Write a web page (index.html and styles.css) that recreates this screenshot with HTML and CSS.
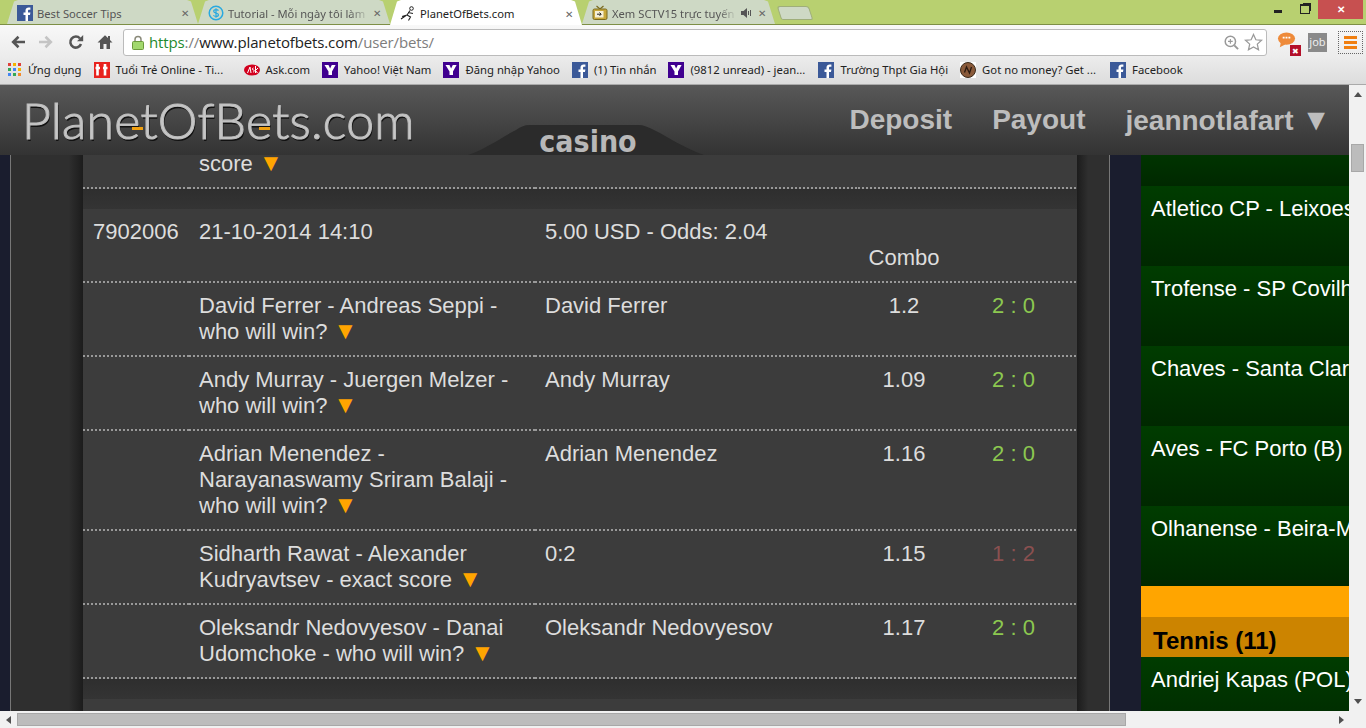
FILE: index.html
```html
<!DOCTYPE html>
<html lang="vi">
<head>
<meta charset="utf-8">
<title>PlanetOfBets.com</title>
<link rel="stylesheet" href="styles.css">
</head>
<body>
<svg class="defs" width="0" height="0" aria-hidden="true">
  <defs>
    <symbol id="fb" viewBox="0 0 16 16"><rect width="16" height="16" fill="#3b5998"/><path d="M11 16V10h2l.4-2.5H11V6c0-.8.3-1.2 1.2-1.2h1.2V2.500c-.4 0-1-.1-1.800-.1C10 2.400 8.500 3.500 8.500 5.600v1.900H6.500V10h2v6z" fill="#fff"/></symbol>
    <symbol id="yh" viewBox="0 0 16 16"><rect width="16" height="16" fill="#400090"/><path d="M2.500 3h4l1.600 3.600L9.800 3h3.800L10 9.500V13H6.500V9.500z" fill="#fff"/></symbol>
  </defs>
</svg>

<header class="chrome">
  <div class="tabstrip">
    <div class="tab tab-first">
      <svg class="fav" viewBox="0 0 16 16"><use href="#fb"/></svg>
      <span class="tab-title">Best Soccer Tips</span>
      <span class="tab-x">✕</span>
    </div>
    <div class="tab tab-second">
      <svg class="fav" viewBox="0 0 16 16"><circle cx="8" cy="8" r="6.800" fill="none" stroke="#29a9e0" stroke-width="1.500"/><path d="M10.500 5.600C10 4.800 9 4.600 8 4.600c-1.300 0-2.300.6-2.300 1.700C5.700 8.700 10.500 7.400 10.500 9.800c0 1.100-1.100 1.700-2.500 1.700-1.100 0-2.100-.4-2.600-1.200M8 3.200v9.600" fill="none" stroke="#29a9e0" stroke-width="1.200"/></svg>
      <span class="tab-title tab-fade">Tutorial - Mỗi ngày tôi làm</span>
      <span class="tab-x">✕</span>
    </div>
    <div class="tab tab-active">
      <svg class="fav" viewBox="0 0 16 16"><circle cx="11.500" cy="2.500" r="1.800" fill="none" stroke="#222" stroke-width="1"/><path d="M10 4.500L7 9l-5 1.500M7 9l3.500 2-2 3.500M8 6.500l5 1M1 13l5-3.500" fill="none" stroke="#222" stroke-width="1.100"/></svg>
      <span class="tab-title tab-dark">PlanetOfBets.com</span>
      <span class="tab-x">✕</span>
    </div>
    <div class="tab tab-last">
      <svg class="fav" viewBox="0 0 16 16"><path d="M4.500 1l3.500 3 3.500-3" fill="none" stroke="#7a6a20" stroke-width="1.200"/><rect x="1" y="4" width="14" height="10.500" rx="1.500" fill="#c8a83c" stroke="#7a6a20"/><rect x="3" y="6" width="8.500" height="6.500" fill="#f6f0d8"/><path d="M5 9.200h4M7.500 7.500l1.700 1.700-1.700 1.700" stroke="#222" fill="none"/></svg>
      <span class="tab-title tab-fade">Xem SCTV15 trực tuyến</span>
      <svg class="tab-audio" viewBox="0 0 12 12"><path d="M1 4h2.500L7 1v10L3.500 8H1z" fill="#555"/><path d="M8.500 4v4M10.500 3v6" stroke="#555"/></svg>
      <span class="tab-x">✕</span>
    </div>
    <div class="tab-new"></div>
    <div class="winctl">
      <span class="win-min"></span>
      <span class="win-max"></span>
      <span class="win-close">✕</span>
    </div>
  </div>

  <div class="toolbar">
    <svg class="tool tool-back" viewBox="0 0 16 16"><path d="M15 8H4M8.500 2.800L3.200 8l5.300 5.200" fill="none" stroke="#555" stroke-width="2.600"/></svg>
    <svg class="tool tool-fwd" viewBox="0 0 16 16"><path d="M1 8h11M7.500 2.800L12.800 8l-5.300 5.200" fill="none" stroke="#c4c4c4" stroke-width="2.600"/></svg>
    <svg class="tool tool-reload" viewBox="0 0 16 16"><path d="M13 10A5.500 5.500 0 1 1 12 4.500" fill="none" stroke="#555" stroke-width="2.500"/><path d="M9 7.200h6.200V1z" fill="#555"/></svg>
    <svg class="tool tool-home" viewBox="0 0 16 16"><path d="M8 1.200L.5 8.500H3V15H6.500V10H9.500V15H13V8.500H15.500L13 6V2H11V4.100z" fill="#555"/></svg>
    <div class="omnibox">
      <svg class="lock" viewBox="0 0 12 15"><path d="M3 7V4.500a3 3 0 0 1 6 0V7" fill="none" stroke="#8a8a7a" stroke-width="1.500"/><rect x=".5" y="6.500" width="11" height="8" rx="1" fill="#a2d86e" stroke="#6c9a3c"/></svg>
      <span class="url"><span class="u-https">https</span><span class="u-path">://</span><span class="u-host">www.planetofbets.com</span><span class="u-path">/user/bets/</span></span>
      <svg class="omni-ic" viewBox="0 0 16 16"><circle cx="6.800" cy="6.800" r="5.500" fill="#fff" stroke="#999" stroke-width="1.600"/><path d="M4.300 6.800h5M6.800 4.300v5" stroke="#999" stroke-width="1.200"/><path d="M11 11l4 4" stroke="#999" stroke-width="2"/></svg>
      <svg class="omni-star" viewBox="0 0 20 20"><path d="M10 1.500l2.500 5.600 6 .6-4.500 4 1.300 6L10 14.700l-5.300 3 1.300-6-4.500-4 6-.6z" fill="#fff" stroke="#999" stroke-width="1.300"/></svg>
    </div>
    <div class="ext-chat">
      <svg class="ext-chat-ic" viewBox="0 0 20 20"><ellipse cx="10" cy="8" rx="9" ry="6.500" fill="#ee8a3a"/><path d="M4 12l-1 5 6-3z" fill="#ee8a3a"/><path d="M6 7h2M9 7h2M12 7h2" stroke="#fff" stroke-width="2"/></svg>
      <span class="ext-badge">✖</span>
    </div>
    <span class="ext-job">job</span>
    <div class="menu-btn"><i></i><i></i><i></i></div>
  </div>

  <nav class="bookmarks">
    <a class="bm"><svg class="bm-ic-apps" viewBox="0 0 13 13"><rect width="3" height="3" fill="#e0403a"/><rect x="5" width="3" height="3" fill="#f4b400"/><rect x="10" width="3" height="3" fill="#e0403a"/><rect y="5" width="3" height="3" fill="#34a853"/><rect x="5" y="5" width="3" height="3" fill="#4285f4"/><rect x="10" y="5" width="3" height="3" fill="#f4b400"/><rect y="10" width="3" height="3" fill="#4285f4"/><rect x="5" y="10" width="3" height="3" fill="#34a853"/><rect x="10" y="10" width="3" height="3" fill="#f4892a"/></svg>Ứng dụng</a>
    <a class="bm bm-long"><svg class="bm-ic" viewBox="0 0 16 16"><rect width="16" height="16" fill="#e8231e"/><path d="M3.500 2v11.500M1.500 6h4.500M11 2v11.500M9 6h4.500" stroke="#fff" stroke-width="2.600"/></svg>Tuổi Trẻ Online - Ti...</a>
    <a class="bm"><svg class="bm-ic" viewBox="0 0 16 16"><ellipse cx="8" cy="8" rx="8" ry="5.500" fill="#d2001e"/><path d="M3.500 11l2.500-6 1 6M9.500 6c-1.500 0-1.500 2 0 2s1 2-.5 2M11.500 4v7M14 6l-2.500 2.500L13.500 11" fill="none" stroke="#fff" stroke-width="1"/></svg>Ask.com</a>
    <a class="bm"><svg class="bm-ic" viewBox="0 0 16 16"><use href="#yh"/></svg>Yahoo! Việt Nam</a>
    <a class="bm"><svg class="bm-ic" viewBox="0 0 16 16"><use href="#yh"/></svg>Đăng nhập Yahoo</a>
    <a class="bm"><svg class="bm-ic" viewBox="0 0 16 16"><use href="#fb"/></svg>(1) Tin nhắn</a>
    <a class="bm bm-long"><svg class="bm-ic" viewBox="0 0 16 16"><use href="#yh"/></svg>(9812 unread) - jean...</a>
    <a class="bm"><svg class="bm-ic" viewBox="0 0 16 16"><use href="#fb"/></svg>Trường Thpt Gia Hội</a>
    <a class="bm bm-long"><svg class="bm-ic" viewBox="0 0 16 16"><rect width="16" height="16" fill="#fff"/><circle cx="8" cy="8" r="7.500" fill="#8a5a3a" stroke="#3a2a1a"/><path d="M4.500 10.500L6.500 5l3 6 2-6" fill="none" stroke="#2a1a10" stroke-width="1.300"/></svg>Got no money? Get ...</a>
    <a class="bm"><svg class="bm-ic" viewBox="0 0 16 16"><use href="#fb"/></svg>Facebook</a>
  </nav>
</header>

<div class="viewport">
  <div class="pagecol">
    <div class="site-head">
      <div class="logo">Plan<span class="logo-e logo-e-first">e</span>tOfB<span class="logo-e">e</span>ts.com</div>
      <div class="casino-tab">
        <svg class="casino-shape" viewBox="0 0 236 30" preserveAspectRatio="none"><path d="M0 30C18 24 34 12 48 5 52 2 56 0 62 0H170C176 0 180 2 186 5 200 12 218 24 236 30z" fill="#2b2b2b"/></svg>
        <span class="casino-label">casino</span>
      </div>
      <nav class="site-nav">
        <a>Deposit</a>
        <a>Payout</a>
        <a>jeannotlafart <span class="nav-arrow">▼</span></a>
      </nav>
    </div>
    <div class="site-body">
      <div class="gutter"></div>
      <div class="panel">
        <table class="bets">
          <colgroup><col class="c1"><col class="c2"><col class="c3"><col class="c4"><col class="c5"></colgroup>
          <tbody>
            <tr class="row row-cut"><td></td><td>score <b class="arr">▼</b></td><td></td><td></td><td></td></tr>
            <tr class="spacer"><td colspan="5"></td></tr>
            <tr class="row row-head"><td>7902006</td><td>21-10-2014 14:10</td><td>5.00 USD - Odds: 2.04</td><td class="ctr"><br>Combo</td><td></td></tr>
            <tr class="row"><td></td><td>David Ferrer - Andreas Seppi - who will win? <b class="arr">▼</b></td><td>David Ferrer</td><td class="ctr">1.2</td><td class="ctr win">2 : 0</td></tr>
            <tr class="row"><td></td><td>Andy Murray - Juergen Melzer - who will win? <b class="arr">▼</b></td><td>Andy Murray</td><td class="ctr">1.09</td><td class="ctr win">2 : 0</td></tr>
            <tr class="row"><td></td><td>Adrian Menendez - Narayanaswamy Sriram Balaji - who will win? <b class="arr">▼</b></td><td>Adrian Menendez</td><td class="ctr">1.16</td><td class="ctr win">2 : 0</td></tr>
            <tr class="row"><td></td><td>Sidharth Rawat - Alexander Kudryavtsev - exact score <b class="arr">▼</b></td><td>0:2</td><td class="ctr">1.15</td><td class="ctr lose">1 : 2</td></tr>
            <tr class="row"><td></td><td>Oleksandr Nedovyesov - Danai Udomchoke - who will win? <b class="arr">▼</b></td><td>Oleksandr Nedovyesov</td><td class="ctr">1.17</td><td class="ctr win">2 : 0</td></tr>
            <tr class="spacer"><td colspan="5"></td></tr>
            <tr class="row"><td colspan="5"></td></tr>
          </tbody>
        </table>
      </div>
      <div class="gutter-r"></div>
      <aside class="side">
        <div class="match match-cut"></div>
        <div class="match">Atletico CP - Leixoes</div>
        <div class="match">Trofense - SP Covilha</div>
        <div class="match">Chaves - Santa Clara</div>
        <div class="match">Aves - FC Porto (B)</div>
        <div class="match">Olhanense - Beira-Mar</div>
        <div class="side-orange"></div>
        <div class="side-head">Tennis (11)</div>
        <div class="match">Andriej Kapas (POL)</div>
      </aside>
    </div>
  </div>
  <div class="vscroll">
    <span class="arrow-up"></span>
    <span class="vthumb"></span>
    <span class="arrow-down"></span>
  </div>
</div>
<div class="hscroll">
  <span class="arrow-left"></span>
  <span class="hthumb"></span>
  <span class="arrow-right"></span>
</div>
</body>
</html>
```

FILE: styles.css
```css
* { box-sizing: border-box; }
html, body { margin: 0; height: 728px; overflow: hidden; }
body { display: flex; flex-direction: column; width: 1366px; font-family: "Liberation Sans", Arial, sans-serif; background: #1a1d2e; }
.defs { position: absolute; }

/* browser chrome */
.chrome { height: 85px; flex: none; background: #b8d070; font-family: "Noto Sans", sans-serif; }
.tabstrip { height: 25px; display: flex; align-items: flex-end; padding-left: 2px; border-bottom: 1px solid #7d8f45; }
.tab { height: 24px; width: 202px; margin-right: -10px; padding: 2px 14px 0 15px; display: flex; align-items: center; gap: 3px; background: #ced9c5; clip-path: polygon(0 100%, 5px 100%, 12px 6%, 16px 0, calc(100% - 16px) 0, calc(100% - 12px) 6%, calc(100% - 5px) 100%, 100% 100%); font-size: 12px; color: #555; position: relative; white-space: nowrap; }
.tab-first { width: 201px; }
.tab-active { background: #fff; z-index: 2; height: 25px; margin-bottom: -1px; }
.tab-last { width: 203px; }
.fav { width: 16px; height: 16px; flex: none; margin-right: 1px; }
.tab-title { flex: 1; overflow: hidden; font-size: 11.2px; min-width: 0; }
.tab-dark { color: #222; }
.tab-fade { -webkit-mask-image: linear-gradient(to right, #000 85%, transparent); mask-image: linear-gradient(to right, #000 85%, transparent); }
.tab-x { font-size: 10px; color: #666; flex: none; }
.tab-audio { width: 12px; height: 12px; flex: none; margin-right: 3px; }
.tab-new { width: 32px; height: 14px; margin: 0 0 4px 9px; background: #ced9c5; border: 1px solid #9fae7a; border-radius: 3px 3px 2px 2px; transform: skewX(18deg); flex: none; }
.winctl { margin-left: auto; align-self: flex-start; display: flex; align-items: flex-start; height: 19px; }
.win-min { width: 8px; height: 3px; background: #222; margin: 10px 18px 0 0; }
.win-max { width: 10px; height: 10px; border: 1px solid #222; border-top-width: 2px; margin: 4px 8px 0 0; box-shadow: 2px -2px 0 -1px #222; }
.win-close { width: 45px; height: 19px; background: #c75050; color: #fff; font-size: 10px; line-height: 18px; text-align: center; font-weight: 700; margin-right: 3px; }

.toolbar { height: 32px; display: flex; align-items: center; padding: 2px 3px 0 10px; background: linear-gradient(#f8f8f8, #ececec); }
.tool { width: 16px; height: 16px; flex: none; }
.tool-back { margin-right: 12px; }
.tool-fwd { margin-right: 14px; }
.tool-reload { margin-right: 13px; }
.tool-home { margin-right: 10px; }
.omnibox { width: 1144px; height: 27px; flex: none; display: flex; align-items: center; padding: 0 3px 0 8px; background: #fff; border: 1px solid #bbb; border-radius: 3px; }
.lock { width: 12px; height: 15px; flex: none; margin-right: 5px; }
.url { flex: 1; font-family: "Open Sans", sans-serif; font-size: 15px; letter-spacing: -.13px; white-space: nowrap; }
.u-https { color: #1e8a2e; }
.u-path { color: #7d7d7d; }
.u-host { color: #222; }
.omni-ic { width: 15px; height: 15px; flex: none; margin-right: 5px; }
.omni-star { width: 19px; height: 19px; flex: none; }
.ext-chat { position: relative; width: 24px; height: 22px; flex: none; margin-left: 10px; }
.ext-chat-ic { width: 19px; height: 19px; display: block; }
.ext-badge { position: absolute; right: 0; bottom: -3px; width: 11px; height: 11px; background: #b3102a; color: #fff; font-size: 8px; line-height: 11px; text-align: center; }
.ext-job { width: 19px; height: 19px; margin-left: 7px; flex: none; background: #8a8a8a; color: #eee; font-size: 11px; line-height: 18px; text-align: center; }
.menu-btn { width: 25px; height: 23px; margin-left: 11px; flex: none; padding: 4px 5px; border: 1px dotted #666; display: flex; flex-direction: column; justify-content: space-between; }
.menu-btn i { display: block; height: 3px; background: #f07f10; }

.bookmarks { height: 28px; display: flex; align-items: center; gap: 12px; padding: 0 0 2px 8px; background: linear-gradient(#ececec, #dcdcdc); border-bottom: 1px solid #aaa; font-size: 11.3px; color: #222; white-space: nowrap; }
.bm { display: flex; align-items: center; gap: 6px; flex: none; }
.bm-long { width: 138px; }
.bm-ic { width: 16px; height: 16px; flex: none; }
.bm-ic-apps { width: 13px; height: 13px; flex: none; margin-right: 1px; }

/* viewport */
.viewport { flex: 1; min-height: 0; display: flex; }
.pagecol { flex: 1; min-width: 0; display: flex; flex-direction: column; }
.site-head { height: 70px; flex: none; background: linear-gradient(#585858, #333); display: flex; align-items: flex-start; position: relative; }
.logo { font-family: Lato, sans-serif; font-weight: 300; font-size: 50px; line-height: 70px; letter-spacing: .2px; color: #c8c8c8; margin: 0 0 0 22px; -webkit-text-stroke: 1.1px #bdbdbd; text-shadow: 1px 2px 0 #111; white-space: nowrap; }
.logo-e { position: relative; }
.logo-e::after { content: ""; position: absolute; left: 13px; top: 37px; width: 11px; height: 3px; background: #f0a010; }
.logo-e-first::after { left: 18px; }
.casino-tab { position: absolute; left: 468px; bottom: 0; width: 236px; height: 30px; overflow: hidden; }
.casino-shape { position: absolute; inset: 0; width: 100%; height: 100%; }
.casino-label { position: relative; display: block; text-align: center; font-family: "DejaVu Sans Condensed", "DejaVu Sans", sans-serif; font-weight: 700; font-size: 30px; line-height: 30px; color: #b8b8b8; padding: 2px 0 0 4px; }
.site-nav { position: absolute; right: 18px; top: 18px; display: flex; gap: 40px; font-size: 28px; line-height: 34px; font-weight: 700; color: #bdbdbd; white-space: nowrap; }
.nav-arrow { font-size: 30px; }

.site-body { flex: 1; min-height: 0; display: flex; overflow: hidden; background: #1a1d2e; }
.gutter { flex: none; margin-left: 10px; border-left: 1px solid #777; width: 73px; background: linear-gradient(to right, #2f2f2f 80%, #1c1c1c); }
.gutter-r { width: 33px; flex: none; border-right: 1px solid #777; background: linear-gradient(to right, #1c1c1c, #2f2f2f 35%); }
.panel { width: 994px; flex: none; overflow: hidden; background: #3c3c3c; }
.bets { width: 994px; table-layout: fixed; border-collapse: separate; border-spacing: 0; font-size: 22px; line-height: 26px; color: #ddd; margin-top: -4px; }
.c1 { width: 106px; } .c2 { width: 346px; } .c3 { width: 323px; } .c4 { width: 92px; } .c5 { width: 127px; }
.row td { padding: 10px 10px 12px; vertical-align: top; background: repeating-linear-gradient(to right, #999 0 2px, transparent 2px 4px) left bottom / 100% 2px no-repeat; }
.row-cut td { padding: 0 10px; height: 38px; }
.row-head td { height: 74px; }
.row td.ctr { text-align: center; padding-left: 0; padding-right: 0; }
.spacer td { height: 20px; padding: 0; background: linear-gradient(#2e2e2e, #343434); }
.arr { color: #ffa500; font-weight: 400; font-size: 24px; line-height: 0; }
.win { color: #8cc850; }
.lose { color: #8a5050; }

.side { width: 208px; flex: none; margin-left: 31px; overflow: hidden; font-size: 22px; line-height: 26px; color: #fff; white-space: nowrap; }
.match { height: 80px; padding: 10px 0 0 10px; background: linear-gradient(#003c00, #002800); overflow: hidden; }
.match-cut { height: 31px; padding: 0; background: linear-gradient(#003400, #002800); }
.side-orange { height: 31px; background: #ffa500; }
.side-head { height: 40px; padding: 11px 0 0 12px; background: #cc8400; color: #000; font-weight: 700; font-size: 24px; }

.vscroll { width: 17px; flex: none; background: #f1f1f1; position: relative; }
.vthumb { position: absolute; left: 2px; top: 59px; width: 13px; height: 28px; background: #bcbcbc; border: 1px solid #a8a8a8; }
.arrow-up { position: absolute; left: 5px; top: 7px; border: 4px solid transparent; border-top: 0; border-bottom: 5px solid #505050; }
.arrow-down { position: absolute; left: 5px; bottom: 7px; border: 4px solid transparent; border-bottom: 0; border-top: 5px solid #505050; }
.hscroll { height: 17px; flex: none; background: #f1f1f1; position: relative; }
.hthumb { position: absolute; left: 17px; top: 2px; width: 1109px; height: 13px; background: #bcbcbc; border: 1px solid #a8a8a8; }
.arrow-left { position: absolute; left: 6px; top: 5px; border: 4px solid transparent; border-left: 0; border-right: 5px solid #505050; }
.arrow-right { position: absolute; right: 22px; top: 5px; border: 4px solid transparent; border-right: 0; border-left: 5px solid #505050; }
```
